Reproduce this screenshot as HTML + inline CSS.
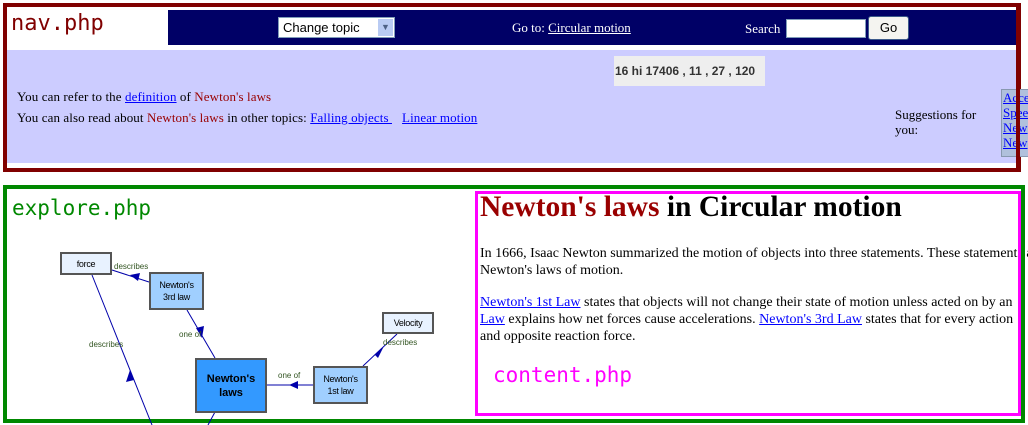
<!DOCTYPE html>
<html><head><meta charset="utf-8"><style>
body{margin:0;width:1028px;height:425px;position:relative;overflow:hidden;background:#fff;font-family:"Liberation Serif",serif;font-size:13px}
.a{position:absolute}
a{color:#00f;text-decoration:underline}
.r{color:#900}
.mono{font-family:"DejaVu Sans Mono","Liberation Mono",monospace}
.node{position:absolute;border:2px solid #555;box-sizing:border-box;font-family:"Liberation Sans",sans-serif;font-size:9px;text-align:center;display:flex;align-items:center;justify-content:center;line-height:12px;letter-spacing:-0.3px}
.lbl{position:absolute;font-family:"Liberation Sans",sans-serif;font-size:8px;color:#335522}
</style></head><body>
<div class="a" style="left:3px;top:3px;width:1018px;height:169px;box-sizing:border-box;border:4px solid #800000"></div>
<div class="a" style="left:168px;top:10px;width:848px;height:35px;background:#006"></div>
<div class="a" style="left:7px;top:50px;width:1009px;height:113px;background:#ccf"></div>
<div class="a mono" style="left:11px;top:11px;font-size:22px;color:#800000">nav.php</div>
<div class="a" style="left:278px;top:17px;width:117px;height:21px;background:#fff;border:1px solid #7f9db9;box-sizing:border-box;font-family:'Liberation Sans',sans-serif;font-size:13px;line-height:19px;padding-left:4px">Change topic<span style="position:absolute;right:1px;top:1px;width:15px;height:17px;background:#b9cbf3;color:#4d6185;font-size:9px;text-align:center;line-height:17px">&#9660;</span></div>
<div class="a" style="left:512px;top:20px;color:#fff">Go to: <a style="color:#fff">Circular motion</a></div>
<div class="a" style="left:745px;top:21px;color:#fff">Search</div>
<div class="a" style="left:786px;top:19px;width:80px;height:19px;background:#fff;border:1px solid #7f9db9;box-sizing:border-box"></div>
<div class="a" style="left:868px;top:16px;width:41px;height:24px;background:#f4f4f0;border:1px solid #3c5a8a;border-radius:3px;box-sizing:border-box;font-family:'Liberation Sans',sans-serif;font-size:13px;text-align:center;line-height:22px">Go</div>
<div class="a" style="left:614px;top:56px;width:150px;height:30px;background:#eee;font-family:'Liberation Sans',sans-serif;font-weight:bold;font-size:12px;color:#333;line-height:30px;padding-left:1px">16 hi 17406 , 11 , 27 , 120</div>
<div class="a" style="left:17px;top:89px;letter-spacing:0.1px">You can refer to the <a>definition</a> of <span class="r">Newton's laws</span></div>
<div class="a" style="left:17px;top:110px;letter-spacing:0.1px">You can also read about <span class="r">Newton's laws</span> in other topics: <a>Falling objects </a>&nbsp;&nbsp; <a>Linear motion </a></div>
<div class="a" style="left:895px;top:107px;line-height:15px">Suggestions for<br>you:</div>
<div class="a" style="left:1001px;top:89px;width:30px;height:66px;background:#b0c0dc;border:1px solid #8898b0;line-height:15px;padding-left:1px;overflow:hidden"><a>Acce</a><br><a>Spee</a><br><a>New</a><br><a>New</a></div>
<div class="a" style="left:1016px;top:3px;width:4px;height:169px;background:#800000"></div>
<div class="a" style="left:3px;top:185px;width:1022px;height:238px;box-sizing:border-box;border:4px solid #080"></div>
<div class="a mono" style="left:12px;top:196px;font-size:21px;color:#080">explore.php</div>
<svg class="a" style="left:0;top:180px" width="475" height="245">
<g stroke="#0000aa" stroke-width="1" fill="none">
<line x1="92" y1="95" x2="152" y2="245"/>
<line x1="112" y1="90" x2="149" y2="102"/>
<line x1="187" y1="130" x2="215" y2="178"/>
<line x1="266" y1="205" x2="313" y2="205"/>
<line x1="363" y1="186" x2="397" y2="154"/>
<line x1="215" y1="232" x2="208" y2="245"/>
</g>
<g fill="#0000aa">
<polygon points="130,190 126,202 134,200"/>
<polygon points="130,95 140,93 138,101"/>
<polygon points="202,158 196,148 204,146"/>
<polygon points="289,205 298,201 298,209"/>
<polygon points="375,175 384,166 378,178"/>
</g>
</svg>
<div class="node" style="left:60px;top:252px;width:52px;height:23px;background:#e8f2ff">force</div>
<div class="node" style="left:149px;top:272px;width:55px;height:38px;background:#a0cfff">Newton's<br>3rd law</div>
<div class="node" style="left:382px;top:312px;width:52px;height:22px;background:#e8f2ff">Velocity</div>
<div class="node" style="left:195px;top:358px;width:72px;height:55px;background:#3399ff;font-size:11px;font-weight:bold;line-height:14px;letter-spacing:0">Newton's<br>laws</div>
<div class="node" style="left:313px;top:366px;width:55px;height:38px;background:#a0cfff">Newton's<br>1st law</div>
<div class="lbl" style="left:114px;top:262px">describes</div>
<div class="lbl" style="left:179px;top:330px">one of</div>
<div class="lbl" style="left:89px;top:340px">describes</div>
<div class="lbl" style="left:383px;top:338px">describes</div>
<div class="lbl" style="left:278px;top:371px">one of</div>
<div class="a" style="left:475px;top:191px;width:553px;height:225px;overflow:hidden">
<div class="a" style="left:5px;top:0px;font-size:29.5px;font-weight:bold;white-space:nowrap"><span class="r">Newton's laws</span> in Circular motion</div>
<div class="a" style="left:5px;top:54px;width:700px;line-height:17px;font-size:14px;white-space:nowrap">In 1666, Isaac Newton summarized the motion of objects into three statements. These statements are<br>Newton's laws of motion.</div>
<div class="a" style="left:5px;top:103px;width:700px;line-height:17px;font-size:14px;white-space:nowrap"><a>Newton's 1st Law</a> states that objects will not change their state of motion unless acted on by an<br><a>Law</a> explains how net forces cause accelerations. <a>Newton's 3rd Law</a> states that for every action<br>and opposite reaction force.</div>
<div class="a mono" style="left:18px;top:172px;font-size:21px;color:#f0f">content.php</div>
</div>
<div class="a" style="left:475px;top:191px;width:546px;height:225px;box-sizing:border-box;border:3px solid #f0f"></div>
<div class="a" style="left:1021px;top:185px;width:4px;height:238px;background:#080"></div>
</body></html>
